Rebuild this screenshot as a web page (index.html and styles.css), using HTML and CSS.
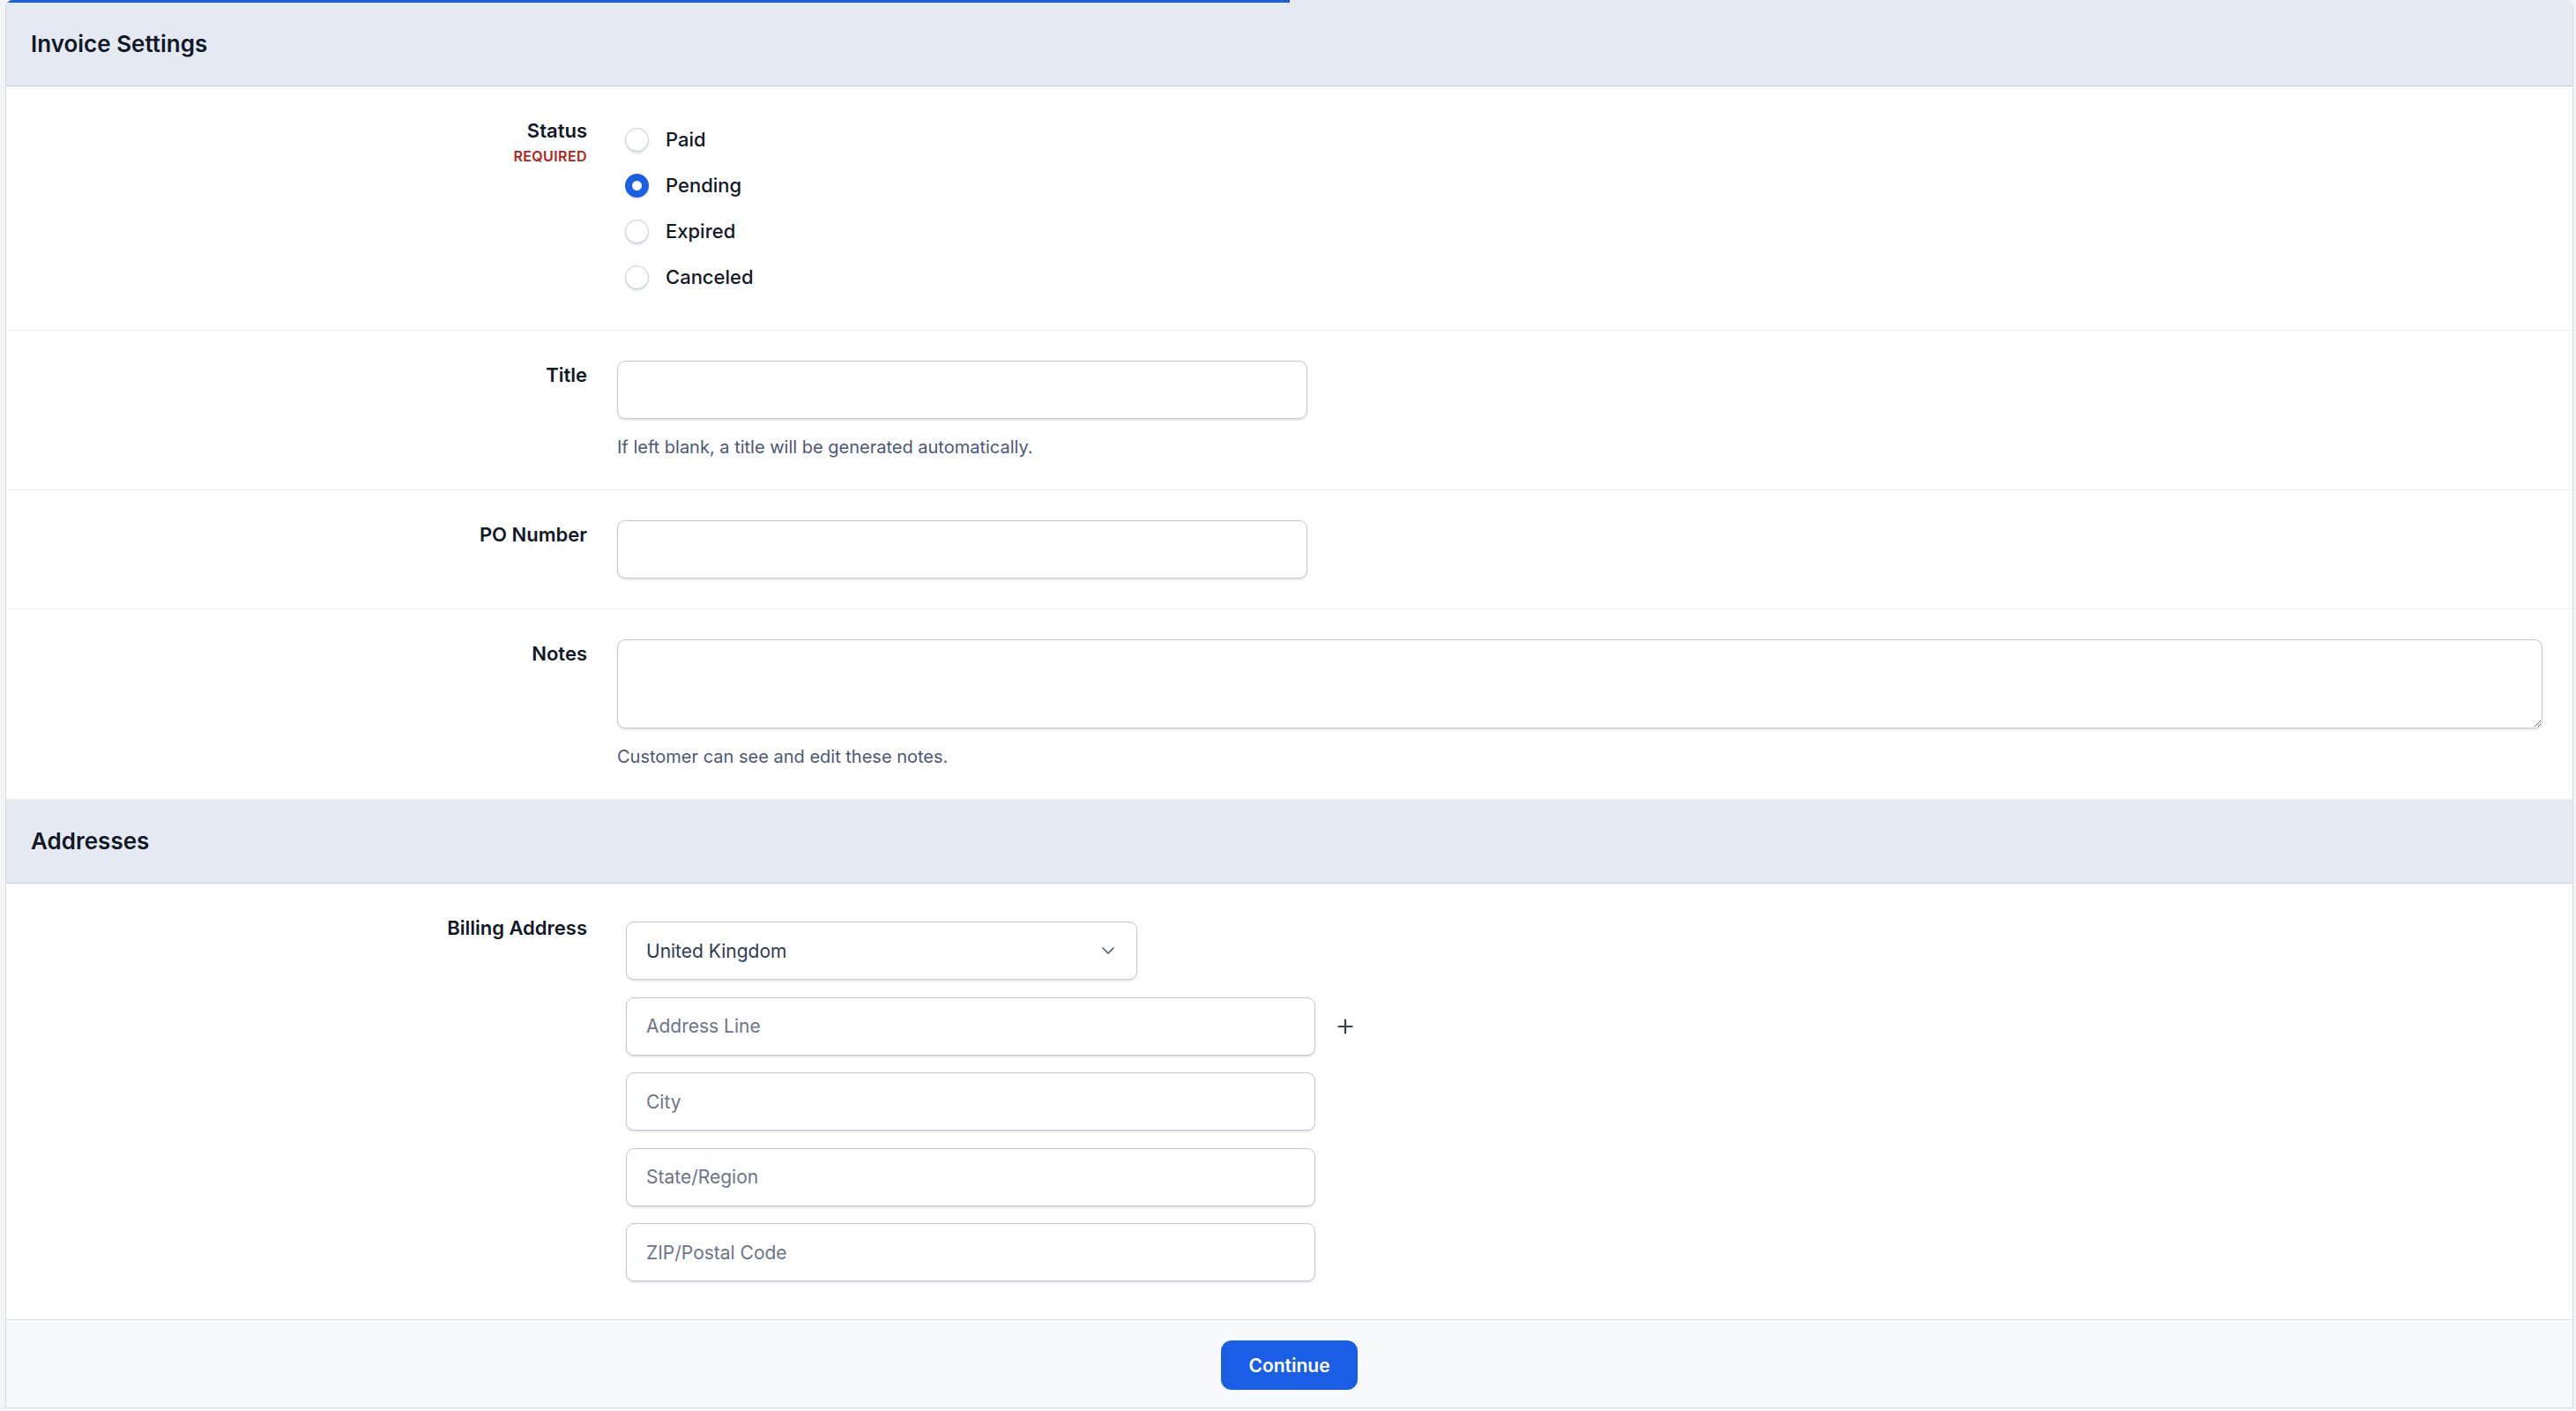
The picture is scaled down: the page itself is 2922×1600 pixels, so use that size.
FILE: index.html
```html
<!DOCTYPE html>
<html lang="en">
<head>
  <meta charset="UTF-8">
  <meta name="viewport" content="width=device-width, initial-scale=1.0">
  <title>Invoice Settings</title>
  <link rel="stylesheet" href="styles.css">
</head>
<body>
  <form class="card" id="invoiceForm">
    <div class="progress"><div class="progress-bar" style="width: 50%"></div></div>

    <div class="section-head">
      <h2>Invoice Settings</h2>
    </div>

    <div class="row">
      <div class="label">
        Status
        <span class="required">REQUIRED</span>
      </div>
      <div class="field">
        <div class="radios">
          <label class="radio"><input type="radio" name="status" value="paid"> Paid</label>
          <label class="radio"><input type="radio" name="status" value="pending" checked> Pending</label>
          <label class="radio"><input type="radio" name="status" value="expired"> Expired</label>
          <label class="radio"><input type="radio" name="status" value="canceled"> Canceled</label>
        </div>
      </div>
    </div>

    <div class="row">
      <label class="label" for="title">Title</label>
      <div class="field">
        <input type="text" id="title" class="input input-md">
        <p class="help">If left blank, a title will be generated automatically.</p>
      </div>
    </div>

    <div class="row">
      <label class="label" for="poNumber">PO Number</label>
      <div class="field">
        <input type="text" id="poNumber" class="input input-md">
      </div>
    </div>

    <div class="row">
      <label class="label" for="notes">Notes</label>
      <div class="field">
        <textarea id="notes" class="input textarea"></textarea>
        <p class="help">Customer can see and edit these notes.</p>
      </div>
    </div>

    <div class="section-head">
      <h2>Addresses</h2>
    </div>

    <div class="row row-last">
      <div class="label">Billing Address</div>
      <div class="field">
        <div class="address">
          <div class="select-wrap">
            <select class="input select">
              <option>United Kingdom</option>
              <option>United States</option>
              <option>Ireland</option>
            </select>
            <svg class="chevron" width="14" height="8" viewBox="0 0 14 8"><polyline points="1,1 7,7 13,1" fill="none" stroke="#4b5563" stroke-width="1.6" stroke-linecap="round" stroke-linejoin="round"/></svg>
          </div>
          <div class="line-row">
            <input type="text" class="input input-lg" placeholder="Address Line">
            <button type="button" class="add-line" aria-label="Add line">
              <svg width="20" height="20" viewBox="0 0 20 20"><path d="M10 2.5v15M2.5 10h15" stroke="#374151" stroke-width="2.2" stroke-linecap="round"/></svg>
            </button>
          </div>
          <input type="text" class="input input-lg" placeholder="City">
          <input type="text" class="input input-lg" placeholder="State/Region">
          <input type="text" class="input input-lg" placeholder="ZIP/Postal Code">
        </div>
      </div>
    </div>

    <div class="footer">
      <button type="submit" class="btn-primary">Continue</button>
    </div>
  </form>
</body>
</html>
```

FILE: styles.css
```css
body {
  font-family: Inter, "Noto Sans", sans-serif;
  margin: 0;
  padding: 0 3px 3px 6px;
  background: #f3f4f6;
  color: #111827;
}
.card {
  background: white;
  border: 1px solid #d5dae2;
  border-top: none;
  border-radius: 8px 8px 0 0;
  overflow: hidden;
}
.progress {
  height: 3px;
  background: #e5e9f2;
}
.progress-bar {
  height: 100%;
  background: #1a5ee6;
}
.section-head {
  height: 94px;
  display: flex;
  align-items: center;
  padding: 0 28px;
  background: #e5e9f2;
  border-bottom: 1px solid #c4cede;
}
.section-head h2 {
  margin: 0;
  font-size: 26px;
  line-height: 32px;
  font-weight: 600;
}
.row {
  display: grid;
  grid-template-columns: 659px 1fr;
  column-gap: 34px;
  padding: 34px 34px 34px 0;
  border-bottom: 1px solid #eeeeee;
}
.row-last {
  border-bottom: 1px solid #dcdfe5;
}
.label {
  display: flex;
  flex-direction: column;
  align-items: flex-end;
  font-size: 22px;
  line-height: 32px;
  font-weight: 600;
}
.required {
  font-size: 16px;
  line-height: 26px;
  font-weight: 600;
  letter-spacing: 0.4px;
  color: #b42318;
}
.radios {
  display: flex;
  flex-direction: column;
}
.radio {
  height: 52px;
  display: flex;
  align-items: center;
  gap: 19px;
  font-size: 22px;
  font-weight: 500;
  cursor: pointer;
}
.radio input {
  appearance: none;
  margin: 0 0 0 9px;
  width: 27px;
  height: 27px;
  border-radius: 50%;
  border: 1px solid #c5cbd5;
  background: white;
  box-shadow: 0 2px 2px rgba(16, 24, 40, 0.12);
}
.radio input:checked {
  border: 8.5px solid #1a5ee6;
}
.input {
  box-sizing: border-box;
  display: block;
  height: 66px;
  padding: 0 22px;
  border: 1px solid #c3c8d4;
  border-radius: 9px;
  background: white;
  box-shadow: 0 2px 2px rgba(16, 24, 40, 0.1);
  font-family: inherit;
  font-size: 21px;
  color: #2e3a4f;
}
.input::placeholder {
  color: #6b7488;
}
.input-md { width: 783px; }
.input-lg { width: 782px; }
.textarea {
  width: 100%;
  height: 101px;
  padding: 14px 22px;
}
.help {
  margin: 18px 0 0;
  font-size: 20px;
  line-height: 28px;
  color: #4b5877;
}
.address {
  display: flex;
  flex-direction: column;
  gap: 19.6px;
  padding: 9px 10px;
}
.select-wrap {
  position: relative;
  width: 580px;
}
.select {
  appearance: none;
  width: 100%;
  padding-right: 50px;
}
.chevron {
  position: absolute;
  right: 26px;
  top: 29px;
  pointer-events: none;
}
.line-row {
  display: flex;
  align-items: center;
  gap: 20px;
}
.add-line {
  width: 28px;
  height: 28px;
  padding: 0;
  border: none;
  background: none;
  display: flex;
  align-items: center;
  justify-content: center;
  cursor: pointer;
}
.footer {
  display: flex;
  justify-content: center;
  padding: 23px 0 20px;
  background: #f7f8fa;
}
.btn-primary {
  height: 56px;
  padding: 0 31px;
  border: none;
  border-radius: 12px;
  background: #1a5ee6;
  color: white;
  font-family: inherit;
  font-size: 21px;
  font-weight: 600;
  cursor: pointer;
}
.btn-primary:hover {
  background: #154fc4;
}
```
